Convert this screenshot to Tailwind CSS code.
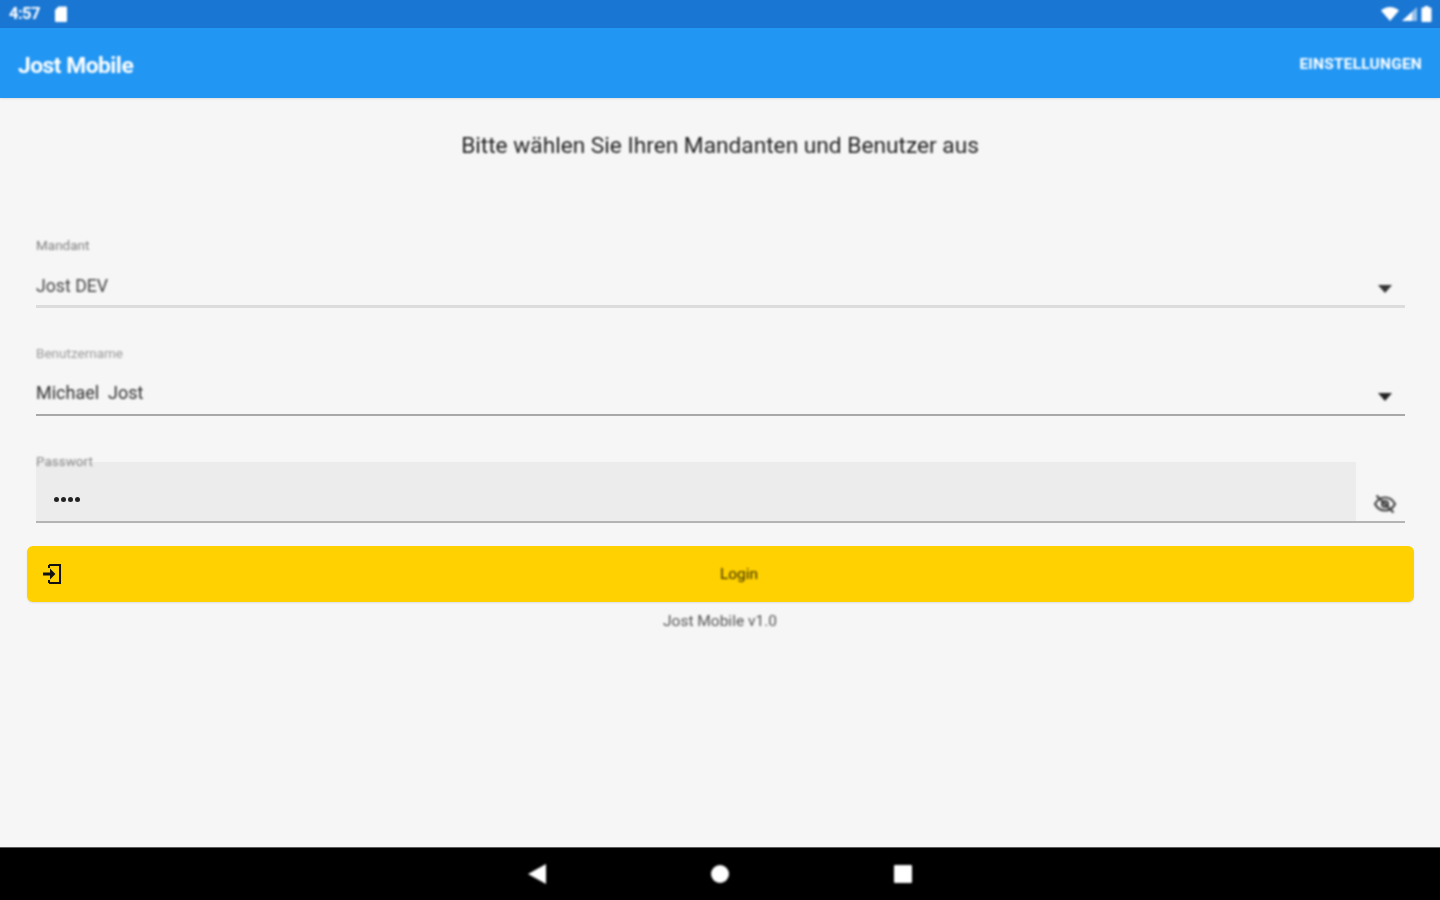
<!DOCTYPE html>
<html lang="de">
<head>
  <meta charset="UTF-8" />
  <meta name="viewport" content="width=device-width, initial-scale=1.0"/>
  <title>Jost Mobile</title>
  <script src="https://cdn.jsdelivr.net/npm/@tailwindcss/browser@4"></script>
</head>
<body class="bg-[#f6f6f6] font-['Roboto',sans-serif]">
  <div class="w-[1440px] h-[900px] flex flex-col overflow-hidden">

    <!-- status bar -->
    <div class="h-[28px] shrink-0 bg-[#1976d2] flex items-center justify-between pl-[9px] pr-[8px] text-white">
      <div class="flex items-center gap-[15px]">
        <span class="mt-[1px] text-[16.5px] font-bold tracking-[-0.5px] [filter:blur(0.8px)]">4:57</span>
        <svg width="12" height="16" viewBox="0 0 12 16" class="[filter:blur(0.8px)]"><path d="M3.5 0.5H11a1 1 0 0 1 1 1V15a1 1 0 0 1-1 1H1a1 1 0 0 1-1-1V4z" fill="#fff"/></svg>
      </div>
      <div class="flex items-center gap-[3px] [filter:blur(0.8px)]">
        <svg width="18" height="14" viewBox="0 0 18 14"><path d="M0 3.5C2.5 1.4 5.6 0 9 0s6.5 1.4 9 3.5L9 14z" fill="#fff"/></svg>
        <svg width="15" height="14" viewBox="0 0 15 14"><path d="M15 0v14H0z" fill="#fff" fill-opacity="0.55"/><path d="M10 5v9H0z" fill="#fff"/></svg>
        <svg width="11" height="16" viewBox="0 0 10 16" class="ml-[1px]"><path d="M3 0h4v1.5h2a1 1 0 0 1 1 1V15a1 1 0 0 1-1 1H1a1 1 0 0 1-1-1V2.5a1 1 0 0 1 1-1h2z" fill="#fff"/></svg>
      </div>
    </div>

    <!-- app bar -->
    <div class="h-[70px] shrink-0 bg-[#2196f3] flex items-center justify-between px-[18px] text-white shadow-[0_1px_2px_rgba(0,0,0,0.1)]">
      <span class="mt-[6px] text-[22.8px] font-bold tracking-[-0.5px] [filter:blur(0.8px)]">Jost Mobile</span>
      <span class="mt-[4px] text-[15.5px] font-bold tracking-[0.2px] [filter:blur(0.8px)]">EINSTELLUNGEN</span>
    </div>

    <!-- content -->
    <div class="flex-1 flex flex-col">
      <p class="mt-[34px] h-[28px] leading-[28px] text-center text-[22.7px] text-[#1f1f1f] [filter:blur(0.8px)]">Bitte wählen Sie Ihren Mandanten und Benutzer aus</p>

      <div class="mt-[78px] pl-[36px] pr-[35px] flex flex-col">
        <div class="flex flex-col">
          <label class="h-[14px] leading-[14px] text-[13.5px] text-[#808080] [filter:blur(0.8px)]">Mandant</label>
          <div class="mt-[21px] h-[35px] flex justify-between border-b-[3px] border-[#dcdcdc]">
            <span class="text-[17.7px] leading-[26px] text-[#444] [filter:blur(0.8px)]">Jost DEV</span>
            <svg width="14" height="8" viewBox="0 0 14 8" class="mt-[12px] mr-[13px] [filter:blur(0.8px)]"><path d="M0 0h14L7 8z" fill="#333"/></svg>
          </div>
        </div>

        <div class="mt-[38px] flex flex-col">
          <label class="h-[14px] leading-[14px] text-[13.5px] text-[#999] [filter:blur(0.9px)]">Benutzername</label>
          <div class="mt-[20px] h-[36px] flex justify-between border-b-[2px] border-[#a8a8a8]">
            <span class="text-[18px] leading-[26px] text-[#2f2f2f] whitespace-pre [filter:blur(0.8px)]">Michael  Jost</span>
            <svg width="14" height="8" viewBox="0 0 14 8" class="mt-[13px] mr-[13px] [filter:blur(0.8px)]"><path d="M0 0h14L7 8z" fill="#222"/></svg>
          </div>
        </div>

        <div class="relative mt-[46px] h-[61px] flex border-b-[2px] border-[#b4b4b4]">
          <label class="absolute left-0 -top-[8px] h-[14px] leading-[14px] text-[13.5px] text-[#888] [filter:blur(0.8px)]">Passwort</label>
          <div class="w-[1320px] h-[59px] bg-[#ececec] pl-[18px] pt-[35px] flex gap-[2px]">
            <span class="w-[5px] h-[5px] rounded-full bg-[#222]"></span>
            <span class="w-[5px] h-[5px] rounded-full bg-[#222]"></span>
            <span class="w-[5px] h-[5px] rounded-full bg-[#222]"></span>
            <span class="w-[5px] h-[5px] rounded-full bg-[#222]"></span>
          </div>
          <svg width="24" height="24" viewBox="0 0 24 24" class="mt-[30px] ml-[17px] [filter:blur(0.8px)]" fill="none" stroke="#444" stroke-width="2.2"><path d="M2 12c2.3-4.3 5.8-6.5 10-6.5S19.7 7.7 22 12c-2.3 4.3-5.8 6.5-10 6.5S4.3 16.3 2 12z"/><circle cx="12" cy="12" r="3"/><path d="M3.5 3.5l17 17"/></svg>
        </div>
      </div>

      <div class="mt-[23px] ml-[27px] mr-[26px] h-[56px] shrink-0 relative flex items-center justify-center bg-[#ffd100] rounded-[6px] shadow-[0_1px_2px_rgba(0,0,0,0.1)]">
        <svg width="24" height="24" viewBox="0 0 24 24" class="absolute left-[13px] top-[16px] [filter:blur(0.4px)]" fill="none" stroke="#111" stroke-width="2"><path d="M9 3h11v18H9M9 3v3M9 21v-3"/><path d="M3 12h10" stroke-width="3"/><path d="M11 9l3 3-3 3z" fill="#111"/></svg>
        <span class="ml-[37px] mt-[2px] text-[15.5px] text-[#3d3200] [filter:blur(0.8px)]">Login</span>
      </div>

      <p class="mt-[10px] text-center text-[15.5px] leading-[18px] text-[#555] [filter:blur(0.8px)]">Jost Mobile v1.0</p>
    </div>

    <!-- nav bar -->
    <div class="h-[53px] shrink-0 bg-black flex items-center justify-center gap-[165px] border-t border-[#999]/60">
      <svg width="18" height="20" viewBox="0 0 18 20" class="[filter:blur(0.8px)]"><path d="M0 10L18 0v20z" fill="#fff"/></svg>
      <svg width="18" height="18" viewBox="0 0 18 18" class="[filter:blur(0.8px)]"><circle cx="9" cy="9" r="9" fill="#fff"/></svg>
      <svg width="18" height="18" viewBox="0 0 18 18" class="[filter:blur(0.8px)]"><rect width="18" height="18" rx="1" fill="#fff"/></svg>
    </div>
  </div>
</body>
</html>
